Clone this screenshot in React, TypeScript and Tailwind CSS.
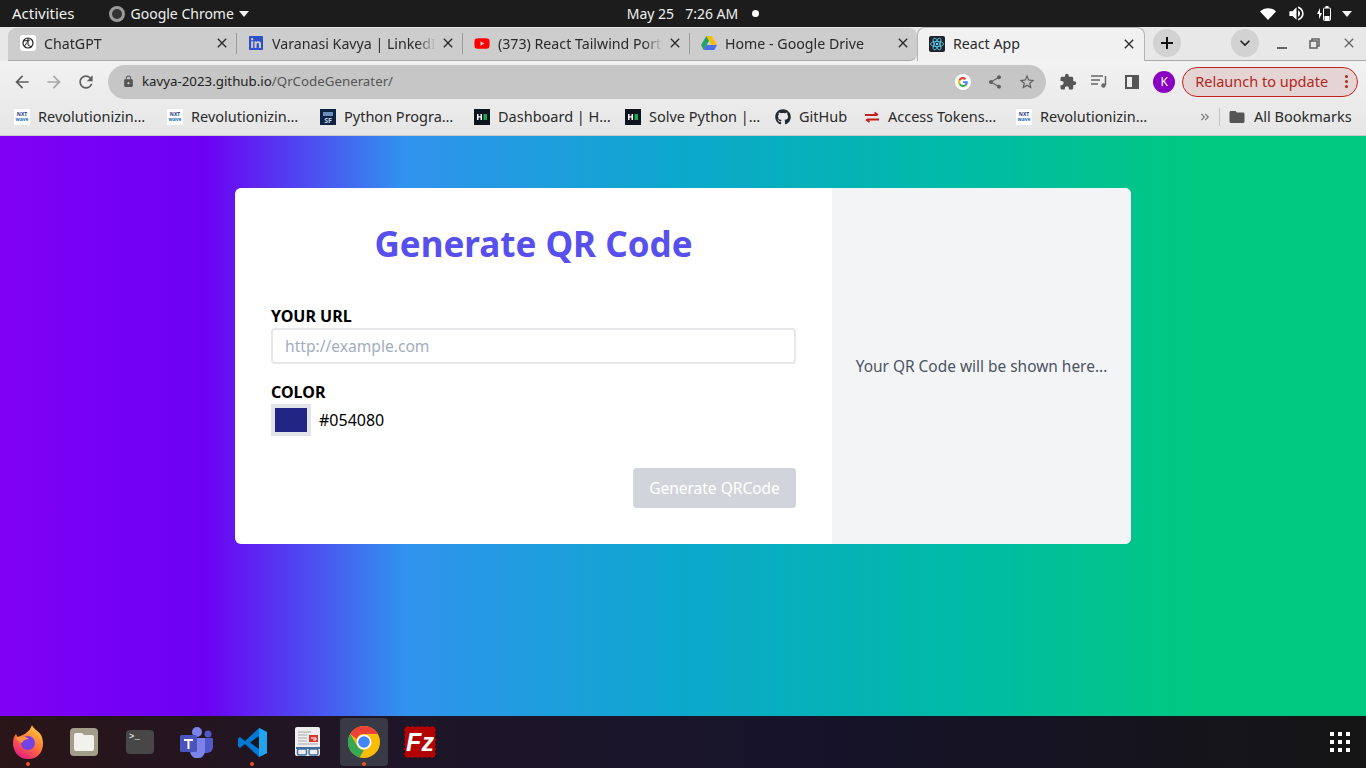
import React from "react";
import { FaGithub, FaLinkedin, FaYoutube } from "react-icons/fa";
import {
  MdArrowBack,
  MdArrowForward,
  MdClose,
  MdExtension,
  MdFolder,
  MdKeyboardArrowDown,
  MdKeyboardDoubleArrowRight,
  MdLock,
  MdOutlineStarBorder,
  MdRefresh,
  MdShare,
  MdVolumeUp
} from "react-icons/md";

const Caret = () => (
  <svg width="10" height="6" viewBox="0 0 10 6">
    <path d="M0 0h10L5 6z" fill="#f2f2f2" />
  </svg>
);

const ChatGptIcon = () => (
  <svg width="16" height="16" viewBox="0 0 16 16">
    <rect width="16" height="16" rx="3" fill="#fff" />
    <circle cx="8" cy="8" r="5" fill="none" stroke="#222" strokeWidth="1.2" />
    <path d="M8 3v7l3.500 2M4 6l6-1M4.500 11l3.500-5" fill="none" stroke="#222" strokeWidth="1" />
  </svg>
);

const DriveIcon = () => (
  <svg width="16" height="14" viewBox="0 0 16 14">
    <path d="M5.300 0h5.400l5.300 9h-5.400z" fill="#fbbc04" />
    <path d="M5.300 0 0 9l2.700 5 5.300-9z" fill="#1fa463" />
    <path d="M2.700 14h10.600l2.700-5H5.300z" fill="#4d6ee6" />
  </svg>
);

const ReactIcon = () => (
  <svg width="16" height="16" viewBox="0 0 16 16">
    <rect width="16" height="16" rx="2" fill="#20232a" />
    <g fill="none" stroke="#61dafb" strokeWidth=".8">
      <ellipse cx="8" cy="8" rx="6.500" ry="2.600" />
      <ellipse cx="8" cy="8" rx="6.500" ry="2.600" transform="rotate(60 8 8)" />
      <ellipse cx="8" cy="8" rx="6.500" ry="2.600" transform="rotate(120 8 8)" />
    </g>
    <circle cx="8" cy="8" r="1.300" fill="#61dafb" />
  </svg>
);

const NxtIcon = () => (
  <span className="flex h-4 w-4 shrink-0 flex-col items-center justify-center overflow-hidden bg-white text-[5px] font-bold leading-[5px] text-[#1e3a8a]">
    <span>NXT</span>
    <span className="text-[#1e6fb0]">wave</span>
  </span>
);

const HackerRankIcon = () => (
  <svg width="16" height="16" viewBox="0 0 16 16" className="shrink-0">
    <rect width="16" height="16" fill="#0e141e" />
    <path d="M3 5h1.500v2.200h2V5H8v6H6.500V8.600h-2V11H3z" fill="#fff" />
    <rect x="9.500" y="5" width="3.500" height="6" fill="#1ba94c" />
  </svg>
);

const SfIcon = () => (
  <span className="flex h-4 w-4 shrink-0 flex-col items-center justify-end bg-[#0d2447] pb-[1px] text-[7px] font-bold leading-[7px] text-[#c8d6ea]">
    <span className="mb-[1px] h-[4px] w-[10px] bg-[#6d8fbd]" />
    SF
  </span>
);

const AccessIcon = () => (
  <svg width="16" height="16" viewBox="0 0 16 16" className="shrink-0">
    <path d="M1 6h12M10.500 3.500 14 6M15 10.500H3M5.500 13 2 10.500" fill="none" stroke="#c5221f" strokeWidth="1.800" />
  </svg>
);

const GoogleIcon = () => (
  <svg width="16" height="16" viewBox="0 0 16 16">
    <circle cx="8" cy="8" r="8" fill="#fff" />
    <path d="M12.800 8.200c0-.4 0-.7-.1-1H8v1.900h2.700c-.1.600-.5 1.200-1 1.500l1.600 1.200c.9-.9 1.500-2.100 1.500-3.600z" fill="#4285f4" />
    <path d="M8 13c1.400 0 2.500-.5 3.300-1.200l-1.600-1.200c-.4.300-1 .5-1.700.5-1.300 0-2.400-.9-2.800-2L3.600 9.800C4.400 11.700 6 13 8 13z" fill="#34a853" />
    <path d="M5.200 9.100c-.2-.7-.2-1.500 0-2.200L3.600 5.700c-.7 1.400-.7 3.100 0 4.500z" fill="#fbbc04" />
    <path d="M8 5.200c.7 0 1.400.3 1.900.7l1.400-1.400C10.400 3.600 9.300 3 8 3 6 3 4.400 4.200 3.600 5.700l1.600 1.200c.4-1 1.500-1.700 2.800-1.700z" fill="#ea4335" />
  </svg>
);

const tabs = [
  { title: "ChatGPT", icon: <ChatGptIcon />, width: "w-[229px]" },
  { title: "Varanasi Kavya | LinkedIn", icon: <FaLinkedin size={16} color="#2f50c8" />, width: "w-[226px]" },
  { title: "(373) React Tailwind Portfolio", icon: <FaYoutube size={17} color="#ff0000" />, width: "w-[227px]" },
  { title: "Home - Google Drive", icon: <DriveIcon />, width: "w-[227px]" }
];

const bookmarks = [
  { title: "Revolutionizin…", icon: <NxtIcon />, width: "w-[153px]" },
  { title: "Revolutionizin…", icon: <NxtIcon />, width: "w-[153px]" },
  { title: "Python Progra…", icon: <SfIcon />, width: "w-[154px]" },
  { title: "Dashboard | H…", icon: <HackerRankIcon />, width: "w-[151px]" },
  { title: "Solve Python |…", icon: <HackerRankIcon />, width: "w-[150px]" },
  { title: "GitHub", icon: <FaGithub size={16} color="#24292f" />, width: "w-[89px]" },
  { title: "Access Tokens…", icon: <AccessIcon />, width: "w-[152px]" },
  { title: "Revolutionizin…", icon: <NxtIcon />, width: "w-[160px]" }
];

const TopBar = () => (
  <div className="grid h-[27px] grid-cols-3 items-center bg-[#1c1c1c] px-3 text-[14px] text-[#f0f0f0]">
    <div className="flex items-center">
      <span className="text-[15px]">Activities</span>
      <span className="ml-[34px] h-4 w-4 rounded-full border-[3px] border-[#9a9a9a] bg-[#333]" />
      <span className="ml-[6px]">Google Chrome</span>
      <span className="ml-[5px]">
        <Caret />
      </span>
    </div>
    <div className="flex items-center justify-center pl-[20px]">
      <span>May 25</span>
      <span className="ml-[11px]">7:26 AM</span>
      <span className="ml-[14px] h-[7px] w-[7px] rounded-full bg-white" />
    </div>
    <div className="flex items-center justify-end pr-[2px]">
      <svg width="16" height="12" viewBox="0 0 16 12">
        <path d="M0 3.500C4.500-1 11.500-1 16 3.500L8 12z" fill="#fff" />
      </svg>
      <MdVolumeUp size={19} color="#fff" className="ml-[11px]" />
      <svg width="14" height="15" viewBox="0 0 14 15" className="ml-[11px]">
        <path d="M3 2 0 8h2v5l3-6H3z" fill="#fff" />
        <rect x="6.500" y="2" width="7" height="12.500" rx="1" fill="none" stroke="#fff" />
        <rect x="8.500" y="0" width="3" height="2" fill="#fff" />
        <rect x="7.500" y="10" width="5" height="4" fill="#fff" />
      </svg>
      <span className="ml-[11px]">
        <Caret />
      </span>
    </div>
  </div>
);

const TabStrip = () => (
  <div className="flex h-[34px] items-end bg-[#e8e8e8] pl-2 text-[14.2px] text-[#2a2a2a]">
    <div className="flex h-[33px] w-[909px] items-center rounded-t-lg rounded-br-lg border-b border-[#a8a8a8] bg-[#cdcdcd] pb-[1px]">
      {tabs.map((tab, i) => (
        <div
          key={tab.title}
          className={`flex ${tab.width} shrink-0 items-center pr-[6px] ${i === 0 ? "pl-3" : "pl-[11px]"} ${i < 3 ? "border-r border-[#9c9c9c]" : ""}`}
        >
          <span className="flex w-4 shrink-0 justify-center">{tab.icon}</span>
          <span className="ml-[8px] min-w-0 flex-1 overflow-hidden whitespace-nowrap [mask-image:linear-gradient(90deg,#000_88%,transparent)]">
            {tab.title}
          </span>
          <MdClose size={16} className="ml-1 shrink-0" />
        </div>
      ))}
    </div>
    <div className="flex h-[34px] w-[228px] shrink-0 items-center rounded-t-lg border border-b-0 border-[#b4b4b4] bg-[#f1f1f1] pb-[1px] pl-[11px] pr-[7px]">
      <ReactIcon />
      <span className="ml-[8px] flex-1">React App</span>
      <MdClose size={16} />
    </div>
    <div className="flex h-[34px] flex-1 items-center border-b border-[#a8a8a8] pb-[1px] pl-[8px]">
      <span className="flex h-7 w-7 items-center justify-center rounded-full bg-[#d2d2d2]">
        <svg width="14" height="14" viewBox="0 0 14 14">
          <path d="M7 1v12M1 7h12" stroke="#111" strokeWidth="2" />
        </svg>
      </span>
      <span className="ml-[50px] flex h-7 w-7 items-center justify-center rounded-full bg-[#d2d2d2]">
        <MdKeyboardArrowDown size={20} color="#222" />
      </span>
      <span className="ml-[18px] mt-[9px] h-[2px] w-[10px] bg-[#666]" />
      <svg width="11" height="11" viewBox="0 0 11 11" className="ml-[22px]">
        <path d="M3 3V1h7v7H8" fill="none" stroke="#666" strokeWidth="1.600" />
        <rect x="1" y="3" width="7" height="7" fill="none" stroke="#666" strokeWidth="1.600" />
      </svg>
      <MdClose size={16} color="#666" className="ml-[21px]" />
    </div>
  </div>
);

const Toolbar = () => (
  <div className="flex h-[41px] items-center bg-[linear-gradient(#f2f2f2,#ebebeb)] pl-[12px] pr-2">
    <MdArrowBack size={20} color="#5f5f5f" />
    <MdArrowForward size={20} color="#a8a8a8" className="ml-[12px]" />
    <MdRefresh size={20} color="#5f5f5f" className="ml-[12px]" />
    <div className="ml-[12px] flex h-[34px] w-[940px] items-center rounded-full bg-[#c6c6c6] pl-[14px] pr-[10px] text-[13.3px]">
      <MdLock size={13} color="#555" />
      <span className="ml-[7px] text-[#222]">kavya-2023.github.io</span>
      <span className="text-[#555]">/QrCodeGenerater/</span>
      <span className="ml-auto">
        <GoogleIcon />
      </span>
      <MdShare size={16} color="#5f5f5f" className="ml-[16px]" />
      <MdOutlineStarBorder size={18} color="#5f5f5f" className="ml-[15px]" />
    </div>
    <MdExtension size={18} color="#555" className="ml-[13px]" />
    <svg width="17" height="14" viewBox="0 0 17 14" className="ml-[14px]">
      <path d="M0 1h12M0 5h9M0 9h7M14.500 1v9" fill="none" stroke="#666" strokeWidth="1.500" />
      <circle cx="12.500" cy="10.500" r="2.200" fill="#666" />
    </svg>
    <span className="ml-[17px] flex h-[14px] w-[14px] justify-end border-2 border-[#555]">
      <span className="h-full w-[5px] bg-[#555]" />
    </span>
    <span className="ml-[14px] flex h-[22px] w-[22px] items-center justify-center rounded-full bg-[#8a00c2] text-[12px] text-white">
      K
    </span>
    <div className="ml-[7px] flex h-[30px] w-[176px] items-center rounded-full border border-[#c5221f] bg-[#e4d4d4] pl-[12px] pr-[9px] text-[14.5px] text-[#b3261e]">
      <span>Relaunch to update</span>
      <span className="ml-auto flex flex-col gap-[2px]">
        <span className="h-[3px] w-[3px] rounded-full bg-[#b3261e]" />
        <span className="h-[3px] w-[3px] rounded-full bg-[#b3261e]" />
        <span className="h-[3px] w-[3px] rounded-full bg-[#b3261e]" />
      </span>
    </div>
  </div>
);

const BookmarksBar = () => (
  <div className="flex h-[34px] items-center border-b border-[#c8c8c8] bg-[linear-gradient(#ebebeb,#e6e6e6)] pb-[4px] pl-[14px] pr-[14px] text-[14.5px] text-[#2a2a2a]">
    {bookmarks.map((bookmark, i) => (
      <div key={i} className={`flex ${bookmark.width} shrink-0 items-center`}>
        {bookmark.icon}
        <span className="ml-2 whitespace-nowrap">{bookmark.title}</span>
      </div>
    ))}
    <MdKeyboardDoubleArrowRight size={14} color="#777" className="ml-[22px]" />
    <span className="ml-[7px] h-[18px] w-px bg-[#c4c4c4]" />
    <MdFolder size={18} color="#555" className="ml-[8px]" />
    <span className="ml-[8px] whitespace-nowrap">All Bookmarks</span>
  </div>
);

const QrCard = () => (
  <div className="flex h-[356px] w-[896px] overflow-hidden rounded-md bg-white">
    <div className="w-[597px] px-9 pt-9">
      <h1 className="text-center text-[35px] font-bold leading-[40px] text-[#5850ec]">Generate QR Code</h1>
      <label className="mt-[39px] block h-6 text-[16px] font-bold leading-[26px] text-black">YOUR URL</label>
      <input
        readOnly
        placeholder="http://example.com"
        className="mt-[1px] block h-9 w-full rounded-sm border-2 border-[#e5e7eb] px-3 text-[15.6px] placeholder:text-[#a0aec0]"
      />
      <label className="mt-[16px] block text-[16px] font-bold leading-[24px] text-black">COLOR</label>
      <div className="flex items-center">
        <span className="block h-8 w-10 border-4 border-[#e2e4ea] bg-[#232584]" />
        <span className="ml-2 text-[16px] text-black">#054080</span>
      </div>
      <div className="mt-8 flex justify-end">
        <button className="h-10 w-[163px] rounded-sm bg-[#d1d5db] pt-[2px] text-[15.5px] text-white">Generate QRCode</button>
      </div>
    </div>
    <div className="flex flex-1 items-center justify-center bg-[#f3f4f6] pt-[2px] text-[15.45px] text-[#4b5563]">
      Your QR Code will be shown here...
    </div>
  </div>
);

const DockIcon = ({ children, dot, active }: { children: React.ReactNode; dot?: boolean; active?: boolean }) => (
  <div className={`relative flex h-12 w-12 items-center justify-center rounded ${active ? "bg-[#3a3a46]" : ""}`}>
    {children}
    {dot && <span className="absolute bottom-0 left-[22px] h-1 w-1 rounded-full bg-[#e95420]" />}
  </div>
);

const Dock = () => (
  <div className="flex h-[52px] items-center justify-between bg-[linear-gradient(90deg,#2a1518,#1d1528_30%,#16132a_60%,#151515)] pl-1 pr-[16px]">
    <div className="flex items-center gap-[8px]">
      <DockIcon dot>
        <svg width="32" height="34" viewBox="0 0 32 34">
          <defs>
            <linearGradient id="ff" x1="0.800" y1="0" x2="0.200" y2="1">
              <stop offset="0" stopColor="#ffd53d" />
              <stop offset=".5" stopColor="#ff7139" />
              <stop offset="1" stopColor="#e31587" />
            </linearGradient>
          </defs>
          <path d="M20 0c1 4 6 5 9 10 4 7 3 24-13 24C6 34 1 26 1 18c0-4 1-7 3-9l2 4c2-3 6-3 8-5 3-2 5-5 6-8z" fill="url(#ff)" />
          <circle cx="16" cy="18" r="7" fill="#7542e5" />
          <path d="M4 12c4-1 10-1 13 2-3 0-6 1-7 4-2-1-5-2-6-6z" fill="#ff9640" />
        </svg>
      </DockIcon>
      <DockIcon>
        <span className="flex h-7 w-7 items-center justify-center rounded bg-[#a39d8c]">
          <svg width="20" height="18" viewBox="0 0 20 18">
            <path d="M2 0h6l2 2h8a2 2 0 0 1 2 2v12a2 2 0 0 1-2 2H2a2 2 0 0 1-2-2V2a2 2 0 0 1 2-2z" fill="#f3f1ec" />
          </svg>
        </span>
      </DockIcon>
      <DockIcon>
        <span className="flex h-6 w-7 items-start rounded-sm bg-[#474747] px-[3px] pt-[2px] font-['Liberation_Mono',monospace] text-[9px] leading-[10px] text-white">
          &gt;_
        </span>
      </DockIcon>
      <DockIcon>
        <svg width="33" height="31" viewBox="0 0 33 31">
          <circle cx="17" cy="5" r="5" fill="#7b83eb" />
          <circle cx="28" cy="7" r="3.500" fill="#5059c9" />
          <path d="M23 11h9a1 1 0 0 1 1 1v8a6 6 0 0 1-6 6h-3z" fill="#5059c9" />
          <path d="M10 11h15v13a7 7 0 0 1-15 0z" fill="#7b83eb" />
          <rect x="0" y="8" width="17" height="17" rx="1.500" fill="#4b53bc" />
          <path d="M4 12h9v2h-3.500v8h-2v-8H4z" fill="#fff" />
        </svg>
      </DockIcon>
      <DockIcon dot>
        <svg width="29" height="29" viewBox="0 0 29 29">
          <path d="M21 0 29 4v21l-8 4L7 16l-5 4-2-1.500v-8L2 9l5 4z" fill="#0078d4" />
          <path d="M21 8 12 14.500 21 21z" fill="#16181f" />
          <path d="M21 0 29 4v21l-8 4z" fill="#23a3ee" />
        </svg>
      </DockIcon>
      <DockIcon>
        <svg width="26" height="30" viewBox="0 0 26 30">
          <rect width="25" height="29" rx="2" fill="#eeeeee" />
          <path d="M3 5h13M3 8h9M3 11h9M3 14h9M3 17h20" stroke="#a8a8a8" strokeWidth="1" />
          <rect x="14" y="8" width="9" height="7" fill="#d9382c" />
          <path d="M16 11h5v2h-3" fill="none" stroke="#fff" />
          <rect x="1" y="20" width="24" height="2" fill="#3f6d9e" />
          <rect x="2.500" y="22" width="9" height="6" rx="1.500" fill="none" stroke="#3f6d9e" strokeWidth="1.400" />
          <rect x="14" y="22" width="9" height="6" rx="1.500" fill="none" stroke="#3f6d9e" strokeWidth="1.400" />
        </svg>
      </DockIcon>
      <DockIcon dot active>
        <svg width="32" height="32" viewBox="0 0 32 32">
          <circle cx="16" cy="16" r="16" fill="#fbbc04" />
          <path d="M16 0a16 16 0 0 1 13.900 8H16a8 8 0 0 0-7.500 5L2.200 7.900A16 16 0 0 1 16 0z" fill="#ea4335" />
          <path d="M2.200 7.900 9 19.500a8 8 0 0 0 7 4.500l-4.500 7.400A16 16 0 0 1 2.200 7.900z" fill="#34a853" />
          <circle cx="16" cy="16" r="7.500" fill="#fff" />
          <circle cx="16" cy="16" r="5.800" fill="#4285f4" />
        </svg>
      </DockIcon>
      <DockIcon>
        <span className="flex h-8 w-8 items-center justify-center border border-dashed border-[#1a1424] bg-[#b30000] font-['Liberation_Sans',sans-serif] text-[25px] font-bold italic leading-none text-white">
          Fz
        </span>
      </DockIcon>
    </div>
    <div className="grid grid-cols-3 gap-[4px]">
      {Array.from({ length: 9 }).map((_, i) => (
        <span key={i} className="h-[4px] w-[4px] bg-white" />
      ))}
    </div>
  </div>
);

export default function App() {
  return (
    <div className="flex h-[768px] w-[1366px] flex-col overflow-hidden font-['Noto_Sans',sans-serif]">
      <TopBar />
      <TabStrip />
      <Toolbar />
      <BookmarksBar />
      <main className="flex flex-1 justify-center bg-[linear-gradient(90deg,#8000f5_0%,#6c00f3_15%,#3193ee_29.6%,#0ca8cc_50%,#00bba6_70%,#00c880_88%)] pt-[52px]">
        <QrCard />
      </main>
      <Dock />
    </div>
  );
}
